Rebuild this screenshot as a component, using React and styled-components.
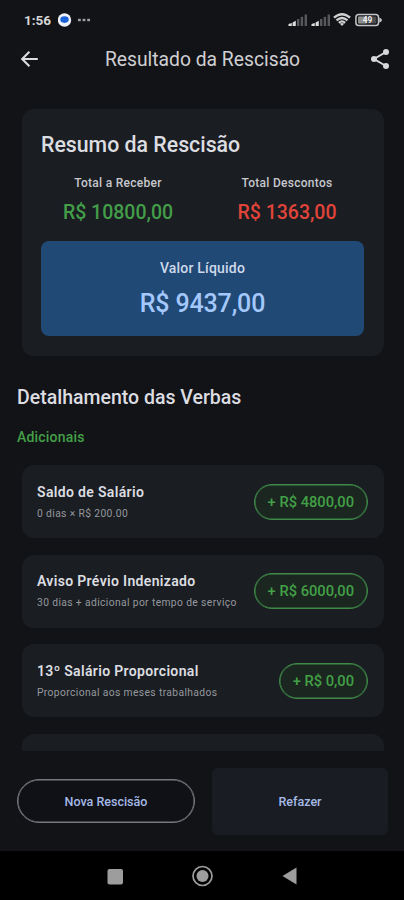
import styled, { createGlobalStyle } from "styled-components";

const GlobalStyle = createGlobalStyle`
  * {
    box-sizing: border-box;
  }

  body {
    margin: 0;
    background-color: #121317;
    font-family: Roboto, "Liberation Sans", sans-serif;
  }
`;

const Screen = styled.div`
  display: flex;
  flex-direction: column;
  width: 404px;
  height: 900px;
  overflow: hidden;
  background-color: #121317;
  color: #dcdde1;
`;

const StatusBar = styled.div`
  display: flex;
  align-items: center;
  justify-content: space-between;
  height: 40px;
  padding: 0 22px 0 24px;
`;

const StatusGroup = styled.div`
  display: flex;
  align-items: center;
`;

const Clock = styled.span`
  width: 34px;
  font-size: 13.5px;
  font-weight: 700;
  line-height: 16px;
  color: #d6d6d6;
`;

const AppBar = styled.header`
  display: grid;
  grid-template-columns: 24px 1fr 24px;
  align-items: center;
  height: 40px;
  padding: 0 12px 2px 17px;
`;

const Title = styled.h1`
  margin: 0;
  padding: 2px 4px 0 0;
  font-size: 19.3px;
  font-weight: 400;
  line-height: 24px;
  text-align: center;
  color: #cfcfd2;
`;

const IconButton = styled.button`
  display: flex;
  padding: 0;
  border: 0;
  background: none;
  cursor: pointer;
`;

const Content = styled.main`
  height: 671px;
  padding: 29px 20px 0 22px;
  overflow: hidden;
`;

const SummaryCard = styled.section`
  height: 247px;
  padding: 23px 20px 0 19px;
  border-radius: 12px;
  background-color: #1a1d21;
`;

const SummaryTitle = styled.h2`
  margin: 0;
  font-size: 21.3px;
  font-weight: 500;
  line-height: 26px;
  white-space: nowrap;
`;

const Totals = styled.div`
  display: grid;
  grid-template-columns: 154px 154px;
  justify-content: space-between;
  margin-top: 17px;
  text-align: center;
`;

const TotalLabel = styled.div`
  font-size: 12px;
  font-weight: 500;
  line-height: 16px;
  letter-spacing: 0.28px;
  color: #c6c8ce;
`;

const TotalValue = styled.div`
  margin-top: 9px;
  font-size: 19.5px;
  font-weight: 500;
  line-height: 26px;
  color: ${(props) => props.$color};
`;

const NetBox = styled.div`
  height: 95px;
  margin-top: 15px;
  padding-top: 19px;
  border-radius: 8px;
  background-color: #214976;
  text-align: center;
`;

const NetLabel = styled.div`
  font-size: 14px;
  font-weight: 500;
  line-height: 16px;
  letter-spacing: 0.2px;
  color: #ced9ea;
`;

const NetValue = styled.div`
  margin-top: 12px;
  font-size: 25px;
  font-weight: 500;
  line-height: 32px;
  letter-spacing: -0.15px;
  color: #a4c8fb;
`;

const SectionTitle = styled.h2`
  margin: 29px 0 0 -5px;
  font-size: 19.5px;
  font-weight: 500;
  line-height: 26px;
`;

const SectionLabel = styled.h3`
  margin: 18px 0 20px -5px;
  font-size: 14px;
  font-weight: 500;
  line-height: 16px;
  letter-spacing: 0.2px;
  color: #43a047;
`;

const List = styled.ul`
  display: flex;
  flex-direction: column;
  gap: 16.5px;
  padding: 0;
  margin: 0;
  list-style: none;
`;

const ListItem = styled.li`
  display: flex;
  align-items: center;
  justify-content: space-between;
  height: 73px;
  padding: 0 16px 0 15px;
  border-radius: 12px;
  background-color: #1a1d21;
`;

const ItemName = styled.div`
  font-size: 14px;
  font-weight: 600;
  line-height: 18px;
  letter-spacing: 0.34px;
`;

const ItemDetail = styled.div`
  margin-top: 6px;
  font-size: 10.3px;
  line-height: 14px;
  letter-spacing: 0.37px;
  color: #95989f;
`;

const Amount = styled.span`
  display: flex;
  align-items: center;
  height: 36px;
  padding: 0 13px;
  border: 1px solid #3f8a49;
  border-radius: 18px;
  box-shadow: inset 0 0 0 0.5px #3f8a49;
  background-color: #1a261f;
  font-size: 14.7px;
  font-weight: 500;
  color: #43a047;
`;

const Footer = styled.footer`
  display: flex;
  align-items: center;
  justify-content: space-between;
  height: 100px;
  padding: 0 16px 0 17px;
`;

const ActionButton = styled.button`
  padding: 0;
  font: 500 12.5px Roboto, sans-serif;
  color: #a5b9e6;
  cursor: pointer;
`;

const OutlinedButton = styled(ActionButton)`
  width: 178px;
  height: 44px;
  border: 1px solid #77797d;
  border-radius: 22px;
  box-shadow: inset 0 0 0 0.5px #77797d;
  background-color: #101116;
`;

const FilledButton = styled(ActionButton)`
  width: 176px;
  height: 67px;
  border: 0;
  border-radius: 6px;
  background-color: #191d23;
`;

const NavBar = styled.nav`
  display: flex;
  align-items: center;
  justify-content: center;
  height: 49px;
  background-color: #000;
`;

const items = [
  { name: "Saldo de Salário", detail: "0 dias × R$ 200.00", amount: "+ R$ 4800,00" },
  {
    name: "Aviso Prévio Indenizado",
    detail: "30 dias + adicional por tempo de serviço",
    amount: "+ R$ 6000,00",
  },
  {
    name: "13º Salário Proporcional",
    detail: "Proporcional aos meses trabalhados",
    amount: "+ R$ 0,00",
  },
];

const NotificationIcons = () => (
  <svg width="36" height="16" viewBox="0 0 36 16">
    <circle cx="6.5" cy="8" r="6.7" fill="#eef2f8" />
    <ellipse cx="6.5" cy="7.6" rx="4.2" ry="3.3" fill="#1b62d6" />
    <g fill="#a0a0a0">
      <rect x="20" y="6.8" width="2.8" height="2.4" />
      <rect x="24.6" y="6.8" width="2.8" height="2.4" />
      <rect x="29.2" y="6.8" width="2.8" height="2.4" />
    </g>
  </svg>
);

const Signal = () => (
  <svg width="22.5" height="16" viewBox="0 0 22.5 16">
    <g fill="#dcdcdc">
      <path d="M0.5 14V12L3.8 11V14Z" />
      <path d="M4.6 14V10.5L7.8 8.8V14Z" />
    </g>
    <g fill="#57585b">
      <rect x="9" y="7" width="2.4" height="7" />
      <rect x="12.7" y="4.8" width="2.4" height="9.2" />
      <rect x="16.6" y="2.5" width="2.4" height="11.5" />
    </g>
  </svg>
);

const Wifi = () => (
  <svg width="18" height="16" viewBox="0 0 19 16">
    <g fill="none" stroke="#d0d0d0" strokeWidth="2.4">
      <path d="M1 5.6Q9.5 -1.8 18 5.6" />
      <path d="M3.7 8.4Q9.5 3.3 15.3 8.4" />
      <path d="M6.2 11Q9.5 8 12.8 11" />
    </g>
    <path d="M7.3 12Q9.5 10.4 11.7 12L9.5 14.4Z" fill="#d0d0d0" />
  </svg>
);

const Battery = () => (
  <svg width="31" height="16" viewBox="-4 0 31 16">
    <rect x="0.9" y="2.6" width="22.6" height="11" rx="2.8" fill="none" stroke="#c5c5c5" strokeWidth="1.5" />
    <rect x="3" y="4.6" width="18.4" height="7" rx="1" fill="#4c4d50" />
    <rect x="3" y="4.6" width="9" height="7" rx="1" fill="#8e8e8e" />
    <path d="M24.3 5.4Q27 6.5 27 8.1T24.3 10.8Z" fill="#c5c5c5" />
    <text x="12.4" y="11.1" fontSize="8.3" fontWeight="700" textAnchor="middle" fill="#eee">
      49
    </text>
  </svg>
);

const BackArrow = () => (
  <svg width="24" height="20" viewBox="0 0 24 20">
    <path
      d="M20.8 10H5.2M12.4 2.8L5.2 10l7.2 7.2"
      fill="none"
      stroke="#dcdcde"
      strokeWidth="2.1"
    />
  </svg>
);

const Share = () => (
  <svg width="24" height="24" viewBox="0 0 24 24">
    <path d="M18 5L6 12l12 7" fill="none" stroke="#d8d8da" strokeWidth="2" />
    <g fill="#d8d8da">
      <circle cx="18" cy="5" r="3" />
      <circle cx="6" cy="12" r="3" />
      <circle cx="18" cy="19" r="3" />
    </g>
  </svg>
);

const NavIcons = () => (
  <svg width="404" height="49" viewBox="0 0 404 49">
    <rect x="107.5" y="18" width="15.5" height="15.5" rx="2" fill="#9d9d9d" />
    <circle cx="202.5" cy="25" r="9.5" fill="none" stroke="#9d9d9d" strokeWidth="1.7" />
    <circle cx="202.5" cy="25" r="6" fill="#9d9d9d" />
    <path d="M282.5 25L296.5 16.5V33.5Z" fill="#9d9d9d" />
  </svg>
);

export default function App() {
  return (
    <>
      <GlobalStyle />
      <Screen>
        <StatusBar>
          <StatusGroup>
            <Clock>1:56</Clock>
            <NotificationIcons />
          </StatusGroup>
          <StatusGroup>
            <Signal />
            <Signal />
            <Wifi />
            <Battery />
          </StatusGroup>
        </StatusBar>
        <AppBar>
          <IconButton aria-label="Voltar">
            <BackArrow />
          </IconButton>
          <Title>Resultado da Rescisão</Title>
          <IconButton aria-label="Compartilhar">
            <Share />
          </IconButton>
        </AppBar>
        <Content>
          <SummaryCard>
            <SummaryTitle>Resumo da Rescisão</SummaryTitle>
            <Totals>
              <div>
                <TotalLabel>Total a Receber</TotalLabel>
                <TotalValue $color="#439d49">R$ 10800,00</TotalValue>
              </div>
              <div>
                <TotalLabel>Total Descontos</TotalLabel>
                <TotalValue $color="#e0443a">R$ 1363,00</TotalValue>
              </div>
            </Totals>
            <NetBox>
              <NetLabel>Valor Líquido</NetLabel>
              <NetValue>R$ 9437,00</NetValue>
            </NetBox>
          </SummaryCard>
          <SectionTitle>Detalhamento das Verbas</SectionTitle>
          <SectionLabel>Adicionais</SectionLabel>
          <List>
            {items.map((item) => (
              <ListItem key={item.name}>
                <div>
                  <ItemName>{item.name}</ItemName>
                  <ItemDetail>{item.detail}</ItemDetail>
                </div>
                <Amount>{item.amount}</Amount>
              </ListItem>
            ))}
            <ListItem />
          </List>
        </Content>
        <Footer>
          <OutlinedButton>Nova Rescisão</OutlinedButton>
          <FilledButton>Refazer</FilledButton>
        </Footer>
        <NavBar>
          <NavIcons />
        </NavBar>
      </Screen>
    </>
  );
}
